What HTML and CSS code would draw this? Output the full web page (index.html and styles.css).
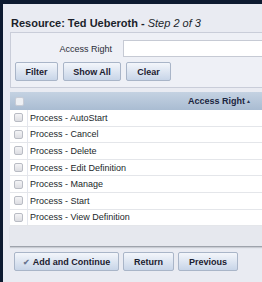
FILE: index.html
```html
<!DOCTYPE html>
<html lang="en">
<head>
  <meta charset="UTF-8" />
  <title>Resource Access Rights</title>
  <link rel="stylesheet" href="styles.css">
</head>
<body>
  <div class="page">
    <h2 class="title">Resource: Ted Ueberoth - <em>Step 2 of 3</em></h2>

    <div class="filter-box">
      <div class="filter-row">
        <label for="right">Access Right</label>
        <input type="text" id="right" />
      </div>
      <div class="filter-buttons">
        <button class="btn btn-filter">Filter</button>
        <button class="btn btn-showall">Show All</button>
        <button class="btn btn-clear">Clear</button>
      </div>
    </div>

    <div class="grid">
      <div class="grid-head">
        <div class="cell-check"><span class="check"></span></div>
        <div class="cell-name">Access Right<span class="sort">&#9650;</span></div>
      </div>
      <div class="grid-row"><div class="cell-check"><span class="check"></span></div><div class="cell-name">Process - AutoStart</div></div>
      <div class="grid-row"><div class="cell-check"><span class="check"></span></div><div class="cell-name">Process - Cancel</div></div>
      <div class="grid-row"><div class="cell-check"><span class="check"></span></div><div class="cell-name">Process - Delete</div></div>
      <div class="grid-row"><div class="cell-check"><span class="check"></span></div><div class="cell-name">Process - Edit Definition</div></div>
      <div class="grid-row"><div class="cell-check"><span class="check"></span></div><div class="cell-name">Process - Manage</div></div>
      <div class="grid-row"><div class="cell-check"><span class="check"></span></div><div class="cell-name">Process - Start</div></div>
      <div class="grid-row"><div class="cell-check"><span class="check"></span></div><div class="cell-name">Process - View Definition</div></div>
      <div class="grid-foot"></div>
    </div>

    <div class="actions">
      <button class="btn btn-add"><span class="tick">&#10004;</span> Add and Continue</button>
      <button class="btn btn-return">Return</button>
      <button class="btn btn-prev">Previous</button>
    </div>
  </div>
</body>
</html>
```

FILE: styles.css
```css
html, body {
  margin: 0;
  overflow: hidden;
}

body {
  background: #0d1a30;
  font-family: 'Liberation Sans', Arial, sans-serif;
  color: #1b1f2a;
}

.page {
  margin: 4px 0 0 3px;
  height: 278px;
  background: #e9ebf2;
  padding: 10px 0 0 7px;
  box-sizing: border-box;
}

.title {
  margin: 0 0 0 1px;
  font-size: 11px;
  font-weight: bold;
  line-height: 18px;
}

.title em {
  font-style: italic;
  font-weight: normal;
}

.filter-box {
  height: 56px;
  box-sizing: border-box;
  border: 1px solid #c9cdd9;
  border-right: none;
  background: #eef0f6;
  padding: 7px 0 0 4px;
}

.filter-row {
  display: flex;
  align-items: center;
  height: 17px;
}

.filter-row label {
  flex: none;
  width: 97px;
  text-align: right;
  font-size: 9px;
  color: #2a2e38;
}

.filter-row input {
  flex: 1;
  min-width: 0;
  margin-left: 11px;
  height: 17px;
  box-sizing: border-box;
  border: 1px solid #c6cad4;
  border-right: none;
  background: #fff;
}

.filter-buttons {
  display: flex;
  gap: 5px;
  margin-top: 5px;
}

.btn {
  height: 19px;
  box-sizing: border-box;
  border: 1px solid #a9b5c8;
  border-radius: 2px;
  background: linear-gradient(#f3f6fb, #c8d5e8);
  font-family: 'Liberation Sans', Arial, sans-serif;
  font-size: 9px;
  font-weight: bold;
  color: #1b2030;
  padding: 0;
}

.btn-filter { width: 43px; }
.btn-showall { width: 58px; }
.btn-clear { width: 45px; }

.grid {
  margin-top: 4px;
}

.grid-head {
  display: flex;
  height: 18px;
  background: linear-gradient(#c4d2e2, #a9bcd2);
}

.cell-check {
  width: 18px;
  flex: none;
  display: flex;
  align-items: center;
  justify-content: center;
  border-right: 1px solid #e4e7ee;
  box-sizing: border-box;
}

.check {
  width: 9px;
  height: 9px;
  box-sizing: border-box;
  border: 1px solid #b9bcc4;
  border-radius: 2px;
  background: linear-gradient(#f4f4f6, #dcdde2);
}

.grid-head .cell-check {
  border-right: none;
}

.grid-head .check {
  border-color: #c8ccd6;
  background: #eef0f4;
}

.cell-name {
  flex: 1;
  display: flex;
  align-items: center;
  padding-left: 2px;
  font-size: 9px;
}

.grid-head .cell-name {
  justify-content: flex-end;
  padding-right: 11px;
  font-weight: bold;
  color: #1b2540;
}

.sort {
  font-size: 5px;
  margin-left: 1px;
  color: #2a3550;
}

.grid-row {
  display: flex;
  height: 16.6px;
  box-sizing: border-box;
  background: #fff;
  border-bottom: 1px solid #e4e6ea;
}

.grid-foot {
  height: 20px;
  background: #e6e8ee;
  border-bottom: 1px solid #9ea3ac;
  box-shadow: 0 1px 1px #c9ccd3;
}

.actions {
  display: flex;
  gap: 4px;
  margin: 5px 0 0 4px;
}

.btn-add { width: 105px; }
.btn-return { width: 51px; }
.btn-prev { width: 60px; }

.tick {
  color: #6a7690;
  font-size: 8px;
  margin-right: 1px;
}
```
